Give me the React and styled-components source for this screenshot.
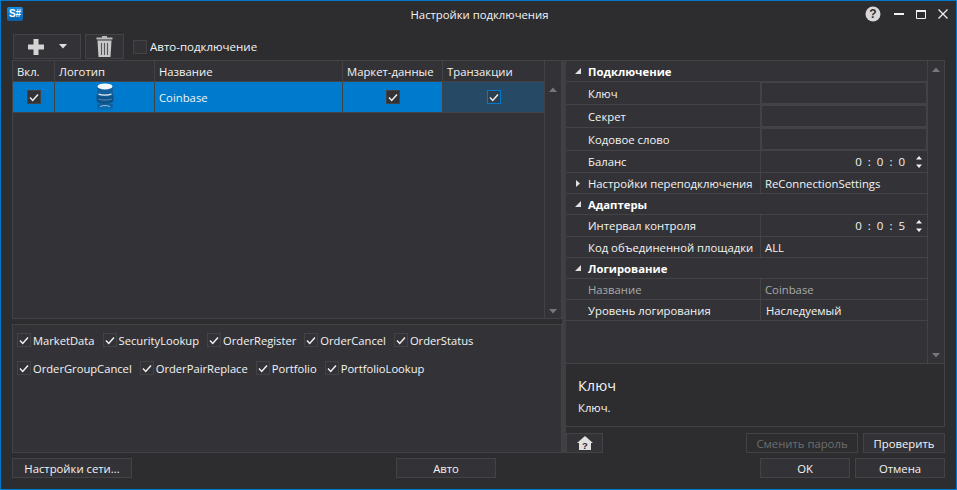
import React from 'react';
import styled, { createGlobalStyle } from 'styled-components';

const Global = createGlobalStyle`
  * { box-sizing: border-box; }
  html, body { margin: 0; padding: 0; background: #2d2d30; }
  body { font-family: "Open Sans", "Noto Sans", "Liberation Sans", sans-serif; font-size: 11.3px; color: #f4f4f4; }
`;

const LINE = '#434346';

const Window = styled.div`
  width: 957px; height: 490px; border: 1px solid #007acc; background: #2d2d30;
  display: flex; flex-direction: column; padding: 0 11px 11px; overflow: hidden;
`;
const TitleBar = styled.div`
  height: 26px; margin: 0 -11px 7px; padding: 0 8px 0 6px;
  display: grid; grid-template-columns: 1fr auto 1fr; align-items: center;
`;
const Logo = styled.div`
  width: 16px; height: 14px; border-radius: 2px; background: linear-gradient(#1590e0, #0b5fa8);
  color: #fff; font: bold 10px/14px "Liberation Sans", sans-serif; text-align: center;
`;
const Title = styled.div`margin-left: 4px;`;
const WinButtons = styled.div`display: flex; justify-content: flex-end; align-items: center; gap: 12px;`;

const Main = styled.div`display: flex; height: 419px;`;
const LeftCol = styled.div`width: 550px; display: flex; flex-direction: column;`;
const Splitter = styled.div`width: 4px; margin-top: 26px; background: #3f3f44;`;
const RightCol = styled.div`width: 379px; margin-top: 26px; display: flex; flex-direction: column;`;

const Toolbar = styled.div`height: 26px; padding: 0 0 1px 1px; display: flex; align-items: stretch; gap: 4px;`;
const ToolButton = styled.button`
  width: ${p => p.$w}px; border: 1px solid ${LINE}; background: #333337; padding: 0;
  display: flex; align-items: center; justify-content: center; gap: ${p => p.$gap || 0}px;
`;
const AutoLabel = styled.label`display: flex; align-items: center; gap: 3px; margin-left: 5px; font-size: 11.5px;`;
const Check = styled.span`
  width: 14px; height: 14px; flex: none; border: 1px solid ${p => p.$focus ? '#007acc' : LINE};
  background: ${p => p.$bg || '#333337'}; display: flex; align-items: center; justify-content: center;
`;

const GridPanel = styled.div`
  height: 259px; border: 1px solid ${LINE}; background: #333337;
  display: grid; grid-template-columns: 1fr 17px;
`;
const Table = styled.div`display: flex; flex-direction: column;`;
const TableRow = styled.div`
  display: grid; grid-template-columns: 42px 100px 188px 100px 101px; height: ${p => p.$h}px;
  border-bottom: 1px solid ${LINE};
`;
const HeadCell = styled.div`
  display: flex; align-items: center; padding-left: 4px; border-right: 1px solid ${LINE};
  &:nth-child(5) { border-right: none; }
`;
const Cell = styled.div`
  background: ${p => p.$bg || '#007acc'}; display: flex; align-items: center;
  justify-content: ${p => p.$left ? 'flex-start' : 'center'}; padding-left: ${p => p.$left ? 4 : 0}px;
  border-right: 1px solid ${LINE}; overflow: hidden;
  &:nth-child(5) { border-right: none; }
`;
const Scroll = styled.div`
  border-left: 1px solid ${LINE}; display: flex; flex-direction: column; align-items: center;
  justify-content: space-between; padding: ${p => p.$pad || '0'};
`;
const Band = styled.div`height: 5px;`;
const OpsPanel = styled.div`
  height: 129px; border: 1px solid ${LINE}; background: #333337; padding: 7px 4px;
  display: flex; flex-direction: column; gap: 12px; font-size: 11.2px;
`;
const OpsRow = styled.div`display: flex; gap: 8px;`;
const Op = styled.label`display: flex; align-items: center; gap: 2px; height: 16px;`;

const PropGrid = styled.div`
  height: 305px; width: 379px; border: 1px solid ${LINE}; border-left: none; background: #333337;
  display: grid; grid-template-columns: 1fr 17px;
`;
const PropList = styled.div`display: flex; flex-direction: column;`;
const PropRow = styled.div`
  height: ${p => p.$h}px; flex: none; border-bottom: 1px solid ${LINE};
  display: grid; grid-template-columns: 194px 1fr; align-items: stretch;
`;
const CatRow = styled.div`
  height: ${p => p.$h}px; flex: none; border-bottom: 1px solid ${LINE};
  display: flex; align-items: center; padding-left: 9px; gap: 7px; font-weight: 700; color: #fff;
`;
const PropName = styled.div`
  display: flex; align-items: center; padding-left: 22px; position: relative;
  color: ${p => p.$muted ? '#a9a9ab' : '#f4f4f4'};
`;
const Expand = styled.span`position: absolute; left: 10px; top: 7px; display: flex;`;
const PropValue = styled.div`
  border-left: 1px solid ${LINE}; display: flex; align-items: center; padding-left: ${p => p.$pad ?? 4}px;
  color: ${p => p.$muted ? '#a9a9ab' : '#f4f4f4'};
`;
const InputBox = styled.div`flex: 1; align-self: stretch; border: 1px solid ${LINE};`;
const TimeValue = styled.div`
  flex: 1; display: flex; align-items: center; justify-content: flex-end; gap: 6px; font-size: 11.5px;
`;
const Spinner = styled.div`
  width: 17px; margin-left: 5px; align-self: stretch; display: flex; flex-direction: column; align-items: center;
  justify-content: center; gap: 4px;
`;

const Description = styled.div`
  height: 63px; width: 379px; border: 1px solid ${LINE}; border-top: none; border-left: none; background: #2d2d30; padding: 13px 12px 0;
`;
const DescTitle = styled.div`font-size: 14.5px; line-height: 18px; margin-bottom: 5px;`;
const DescText = styled.div`line-height: 16px;`;
const PropButtons = styled.div`height: 20px; margin-top: 6px; display: flex; gap: 5px; align-items: stretch;`;
const Btn = styled.button`
  width: ${p => p.$w}px; height: 20px; border: 1px solid ${LINE}; background: ${p => p.disabled ? '#2d2d30' : '#333337'};
  color: ${p => p.disabled ? '#6d6d6d' : '#f4f4f4'}; font: inherit; padding: 0;
  display: flex; align-items: center; justify-content: center;
  margin-left: ${p => p.$push ? 'auto' : '0'};
`;
const Footer = styled.div`height: 20px; margin-top: 5px; display: flex; justify-content: space-between;`;
const FooterGroup = styled.div`display: flex; gap: 5px;`;

const Tick = () => (
  <svg width="10" height="9" viewBox="0 0 10 9"><path d="M1 4.6 L3.7 7.4 L9 1.4" fill="none" stroke="#f1f1f1" strokeWidth="1.5" /></svg>
);
const Tri = ({ dir = 'up', color = '#777', size = 8 }) => (
  <svg width={size} height={size / 2 + 1} viewBox="0 0 8 5">
    <path d={dir === 'up' ? 'M0 5 L4 0.5 L8 5 Z' : 'M0 0 L8 0 L4 4.5 Z'} fill={color} />
  </svg>
);
const Corner = () => (
  <svg width="6" height="6" viewBox="0 0 6 6"><path d="M0 6 L6 6 L6 0 Z" fill="#e0e0e0" /></svg>
);
const Right = () => (
  <svg width="4" height="7" viewBox="0 0 4 7"><path d="M0 0 L4 3.5 L0 7 Z" fill="#e0e0e0" /></svg>
);
const SpinArrows = () => (
  <Spinner>
    <svg width="6" height="4" viewBox="0 0 6 4"><path d="M0 3.4 L3 0 L6 3.4 Z" fill="#f1f1f1" /></svg>
    <svg width="6" height="4" viewBox="0 0 6 4"><path d="M0 0.6 L6 0.6 L3 4 Z" fill="#f1f1f1" /></svg>
  </Spinner>
);
const Time = ({ s }) => (
  <>
    <TimeValue><span>0</span><span>:</span><span>0</span><span>:</span><span>{s}</span></TimeValue>
    <SpinArrows />
  </>
);
const Coins = () => (
  <svg width="18" height="28" viewBox="0 0 18 28">
    <defs>
      <linearGradient id="rf" x1="0" y1="0" x2="0" y2="1">
        <stop offset="0" stopColor="#11588f" stopOpacity=".95" />
        <stop offset="1" stopColor="#11588f" stopOpacity=".1" />
      </linearGradient>
    </defs>
    <path d="M1 3 v15 c0 3.4 16 3.4 16 0 v-15 Z" fill="#125f9c" />
    <path d="M0.6 11.5 c2 3 15 3 16.8 0 v6.5 c-1 4 -16 4 -16.8 0 Z" fill="#0f5288" />
    <ellipse cx="9" cy="3.4" rx="7.5" ry="3" fill="#f4f7fa" />
    <path d="M2.5 11 c3 1.6 10 1.6 13 0" stroke="#e6eff6" strokeWidth="1.2" fill="none" />
    <path d="M2.5 16 c3 1.4 10 1.4 13 0" stroke="#5c9ccb" strokeWidth=".8" fill="none" />
    <path d="M1 28 v-6 c1 -2 15 -2 16 0 v6 Z" fill="url(#rf)" />
    <path d="M4 23.5 c3 -1.2 7 -1.2 10 0" stroke="#a9cde6" strokeWidth=".9" fill="none" />
  </svg>
);

const ops1 = ['MarketData', 'SecurityLookup', 'OrderRegister', 'OrderCancel', 'OrderStatus'];
const ops2 = ['OrderGroupCancel', 'OrderPairReplace', 'Portfolio', 'PortfolioLookup'];

export default function App() {
  return (
    <Window>
      <Global />
      <TitleBar>
        <Logo>S#</Logo>
        <Title>Настройки подключения</Title>
        <WinButtons>
          <svg width="16" height="16" viewBox="0 0 16 16">
            <circle cx="8" cy="8" r="7.5" fill="#d8d8d8" />
            <text x="8" y="12" textAnchor="middle" fontFamily="Liberation Sans" fontWeight="700" fontSize="12" fill="#2d2d30">?</text>
          </svg>
          <svg width="10" height="10" viewBox="0 0 10 10" style={{ marginLeft: 1 }}><rect x="0" y="4" width="10" height="2" fill="#f1f1f1" /></svg>
          <svg width="10" height="9" viewBox="0 0 10 9"><path d="M0.5 1 H9.5 V8.5 H0.5 Z" fill="none" stroke="#f1f1f1" /><rect x="0" y="0" width="10" height="2" fill="#f1f1f1" /></svg>
          <svg width="10" height="10" viewBox="0 0 10 10"><path d="M0.5 0.5 L9.5 9.5 M9.5 0.5 L0.5 9.5" stroke="#f1f1f1" strokeWidth="1.2" /></svg>
        </WinButtons>
      </TitleBar>

      <Main>
        <LeftCol>
          <Toolbar>
            <ToolButton $w={68} $gap={15} aria-label="add">
              <svg width="16" height="16" viewBox="0 0 16 16"><path d="M5.5 0 h5 v5.5 h5.5 v5 h-5.5 v5.5 h-5 v-5.5 h-5.5 v-5 h5.5 Z" fill="#d4d4d4" /></svg>
              <Tri dir="down" color="#e0e0e0" />
            </ToolButton>
            <ToolButton $w={39} aria-label="delete">
              <svg width="17" height="21" viewBox="0 0 17 21">
                <path d="M6 0 h5 v1.5 h5.5 v2 H0.5 v-2 H6 Z" fill="#b8b8b8" />
                <path d="M1.5 4.5 H15.5 L14.5 21 H2.5 Z" fill="#c8c8c8" />
                <path d="M5.5 7 V19 M8.5 7 V19 M11.5 7 V19" stroke="#55555a" strokeWidth="1.1" />
              </svg>
            </ToolButton>
            <AutoLabel><Check />Авто-подключение</AutoLabel>
          </Toolbar>

          <GridPanel>
            <Table>
              <TableRow $h={21}>
                <HeadCell>Вкл.</HeadCell>
                <HeadCell>Логотип</HeadCell>
                <HeadCell>Название</HeadCell>
                <HeadCell>Маркет-данные</HeadCell>
                <HeadCell>Транзакции</HeadCell>
              </TableRow>
              <TableRow $h={31}>
                <Cell><Check $bg="#333337"><Tick /></Check></Cell>
                <Cell><Coins /></Cell>
                <Cell $left>Coinbase</Cell>
                <Cell><Check $bg="#333337"><Tick /></Check></Cell>
                <Cell $bg="#264a66"><Check $focus $bg="#2d3f4e"><Tick /></Check></Cell>
              </TableRow>
            </Table>
            <Scroll $pad="26px 0 4px"><Tri /><Tri dir="down" /></Scroll>
          </GridPanel>

          <Band />

          <OpsPanel>
            <OpsRow>{ops1.map(o => <Op key={o}><Check><Tick /></Check>{o}</Op>)}</OpsRow>
            <OpsRow>{ops2.map(o => <Op key={o}><Check><Tick /></Check>{o}</Op>)}</OpsRow>
          </OpsPanel>
        </LeftCol>

        <Splitter />

        <RightCol>
          <PropGrid>
            <PropList>
              <CatRow $h={21}><Corner />Подключение</CatRow>
              <PropRow $h={23}><PropName>Ключ</PropName><PropValue $pad={0}><InputBox /></PropValue></PropRow>
              <PropRow $h={23}><PropName>Секрет</PropName><PropValue $pad={0}><InputBox /></PropValue></PropRow>
              <PropRow $h={23}><PropName>Кодовое слово</PropName><PropValue $pad={0}><InputBox /></PropValue></PropRow>
              <PropRow $h={22}><PropName>Баланс</PropName><PropValue $pad={0}><Time s="0" /></PropValue></PropRow>
              <PropRow $h={21}>
                <PropName><Expand><Right /></Expand>Настройки переподключения</PropName>
                <PropValue>ReConnectionSettings</PropValue>
              </PropRow>
              <CatRow $h={21}><Corner />Адаптеры</CatRow>
              <PropRow $h={22}><PropName>Интервал контроля</PropName><PropValue $pad={0}><Time s="5" /></PropValue></PropRow>
              <PropRow $h={21}><PropName>Код объединенной площадки</PropName><PropValue>ALL</PropValue></PropRow>
              <CatRow $h={21}><Corner />Логирование</CatRow>
              <PropRow $h={21}><PropName $muted>Название</PropName><PropValue $muted>Coinbase</PropValue></PropRow>
              <PropRow $h={21}><PropName>Уровень логирования</PropName><PropValue $pad={5}>Наследуемый</PropValue></PropRow>
            </PropList>
            <Scroll $pad="6px 0 5px"><Tri /><Tri dir="down" /></Scroll>
          </PropGrid>
          <Description>
            <DescTitle>Ключ</DescTitle>
            <DescText>Ключ.</DescText>
          </Description>
          <PropButtons>
            <Btn $w={37} aria-label="help">
              <svg width="16" height="14" viewBox="0 0 16 14">
                <path d="M8 0 L16 7 H14 V14 H2 V7 H0 Z" fill="#e0e0e0" />
                <text x="8" y="12.5" textAnchor="middle" fontFamily="Liberation Sans" fontWeight="700" fontSize="9.5" fill="#2d2d30">?</text>
              </svg>
            </Btn>
            <Btn $w={112} $push disabled>Сменить пароль</Btn>
            <Btn $w={82}>Проверить</Btn>
          </PropButtons>
        </RightCol>
      </Main>

      <Footer>
        <Btn $w={120}>Настройки сети...</Btn>
        <Btn $w={100}>Авто</Btn>
        <FooterGroup>
          <Btn $w={90}>OK</Btn>
          <Btn $w={90}>Отмена</Btn>
        </FooterGroup>
      </Footer>
    </Window>
  );
}
